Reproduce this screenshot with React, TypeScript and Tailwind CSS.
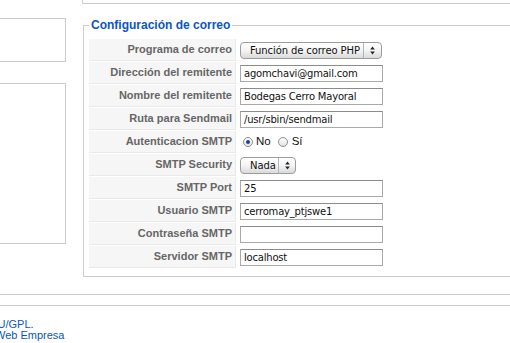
import React from 'react';

type Row = {
  label: string;
  kind: 'select' | 'text' | 'radio' | 'small-select';
  value?: string;
};

const rows: Row[] = [
  { label: 'Programa de correo', kind: 'select', value: 'Función de correo PHP' },
  { label: 'Dirección del remitente', kind: 'text', value: 'agomchavi@gmail.com' },
  { label: 'Nombre del remitente', kind: 'text', value: 'Bodegas Cerro Mayoral' },
  { label: 'Ruta para Sendmail', kind: 'text', value: '/usr/sbin/sendmail' },
  { label: 'Autenticacion SMTP', kind: 'radio' },
  { label: 'SMTP Security', kind: 'small-select', value: 'Nada' },
  { label: 'SMTP Port', kind: 'text', value: '25' },
  { label: 'Usuario SMTP', kind: 'text', value: 'cerromay_ptjswe1' },
  { label: 'Contraseña SMTP', kind: 'text', value: '' },
  { label: 'Servidor SMTP', kind: 'text', value: 'localhost' },
];

const fieldFont = { fontFamily: '"DejaVu Sans", sans-serif' };

function Arrows() {
  return (
    <svg width="5" height="9" viewBox="0 0 5 9">
      <path d="M2.5 0.5 L4.8 3.6 L0.2 3.6 Z" fill="#222" />
      <path d="M2.5 8.5 L4.8 5.4 L0.2 5.4 Z" fill="#222" />
    </svg>
  );
}

function AquaSelect({ value, width, textWidth }: { value: string; width: string; textWidth: string }) {
  return (
    <div
      className={`flex h-[17px] ${width} items-stretch rounded-[4px] border border-[#9c9c9c] bg-gradient-to-b from-white via-[#f4f4f4] to-[#dadada] text-[10px] tracking-[-0.1px] text-[#111]`}
      style={fieldFont}
    >
      <div className={`flex ${textWidth} items-center whitespace-nowrap pl-[9px]`}>{value}</div>
      <div className="w-px bg-[#b5b5b5]" />
      <div className="flex flex-1 items-center justify-center">
        <Arrows />
      </div>
    </div>
  );
}

function Radio({ checked }: { checked: boolean }) {
  return (
    <span className="flex h-[10px] w-[10px] items-center justify-center rounded-full border border-[#8f8f8f] bg-gradient-to-b from-white to-[#e2e2e2]">
      {checked && <span className="h-[4px] w-[4px] rounded-full bg-[#1f3f8f]" />}
    </span>
  );
}

function Field({ row }: { row: Row }) {
  if (row.kind === 'select') {
    return <AquaSelect value={row.value!} width="w-[142px]" textWidth="w-[122px]" />;
  }
  if (row.kind === 'small-select') {
    return <AquaSelect value={row.value!} width="w-[56px]" textWidth="w-[37px]" />;
  }
  if (row.kind === 'radio') {
    return (
      <div className="flex items-center pl-[3px] text-[11.5px] text-[#111]" style={{ fontFamily: '"Liberation Sans", Arial, sans-serif' }}>
        <Radio checked />
        <span className="ml-[3px]">No</span>
        <span className="ml-[7px]">
          <Radio checked={false} />
        </span>
        <span className="ml-[4px]">Sí</span>
      </div>
    );
  }
  return (
    <div
      className="flex h-[17px] w-[143px] items-center whitespace-nowrap border border-[#a9a9a9] border-t-[#8c8c8c] bg-white pl-[3px] text-[10px] tracking-[-0.2px] text-[#111]"
      style={fieldFont}
    >
      {row.value}
    </div>
  );
}

export default function App() {
  return (
    <div
      className="relative h-[343px] w-[510px] overflow-hidden bg-white"
      style={{ fontFamily: '"Liberation Sans", Arial, Helvetica, sans-serif' }}
    >
      <div className="flex items-start">
        {/* left column */}
        <div className="flex w-[66px] flex-col">
          <div className="ml-[-2px] mt-[18px] h-[44px] w-[68px] border border-[#cccccc]" />
          <div className="ml-[-2px] mt-[21px] h-[161px] w-[68px] border border-[#cccccc]" />
        </div>

        {/* right column */}
        <div className="ml-[16px] flex w-[440px] flex-col">
          <div className="h-[4px] border-b border-l border-[#cccccc]" />

          <fieldset className="ml-[1px] mt-[14px] w-[434px] border border-[#cccccc] px-[5px] pb-[8px] pt-[7px]">
            <legend className="px-[2px] text-[12px] font-bold leading-[14px] text-[#0b55c4]">
              Configuración de correo
            </legend>

            <div className="flex flex-col gap-[1px]">
              {rows.map((row) => (
                <div key={row.label} className="flex h-[22px] gap-[1px]">
                  <div className="flex w-[147px] items-center justify-end border-b border-r border-[#e9e9e9] bg-[#f6f6f6] pr-[3px] text-[11px] font-bold text-[#666666]">
                    {row.label}
                  </div>
                  <div className="flex flex-1 items-center pl-[3px]">
                    <Field row={row} />
                  </div>
                </div>
              ))}
            </div>
          </fieldset>
        </div>
      </div>

      {/* footer */}
      <div className="mt-[17px] h-px bg-[#cccccc]" />
      <div className="mt-[10px] h-px bg-[#cccccc]" />
      <div className="pt-[13px] text-[11px] leading-[11px]">
        <div className="ml-[-19px] whitespace-nowrap">
          <span className="text-[#0b55c4]">GNU/GPL</span>
          <span className="text-[#333333]">.</span>
        </div>
        <div className="ml-[-5px] whitespace-nowrap text-[#0b55c4]">Web Empresa</div>
      </div>
    </div>
  );
}
